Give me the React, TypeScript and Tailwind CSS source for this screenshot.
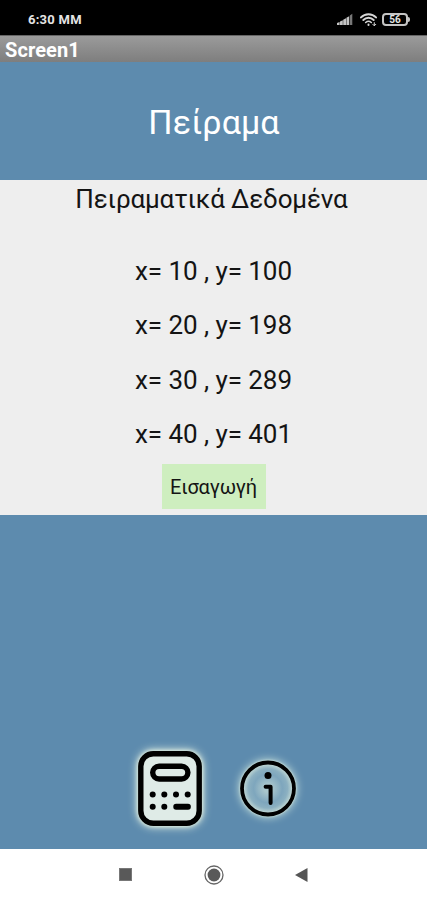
import React from "react";

const measurements = [
  { x: 10, y: 100 },
  { x: 20, y: 198 },
  { x: 30, y: 289 },
  { x: 40, y: 401 },
];

const StatusBar = () => (
  <div className="flex h-[35px] shrink-0 items-center justify-between bg-black pt-[4px] pr-[17px] pl-[28px] text-[#e4e4e4]">
    <span className="text-[13px] leading-none font-bold tracking-[0.25px] whitespace-pre">6:30 MM</span>
    <div className="flex items-center">
      <svg width="16" height="13" viewBox="0 0 16 13" fill="#c4c4c4">
        <path d="M0 12V10L2.6 9V12ZM3 12V8.6L5.8 7.2V12ZM6.2 12V6.8L9 5.2V12ZM9.4 12V4.8L12.2 3.2V12Z" />
        <path d="M12.8 12V2.6L15.3 0.8V12Z" fill="#777" />
      </svg>
      <svg className="ml-[7px]" width="17" height="14" viewBox="0 0 17 14" fill="none" stroke="#d6d6d6" strokeLinecap="round">
        <path d="M1 4.4C5 0.1 12 0.1 16 4.4" strokeWidth="2" />
        <path d="M3.3 7C6.3 4 10.7 4 13.7 7" strokeWidth="1.9" />
        <path d="M5.7 9.5C7.4 8 9.6 8 11.3 9.5" strokeWidth="1.6" />
        <path d="M8.5 11.6V12" strokeWidth="2" />
        <path d="M14.3 9.7V12.5M12.8 11.3L14.3 12.8L15.8 11.3" strokeWidth="1" />
      </svg>
      <div className="ml-[5px] flex h-[13px] w-[26px] items-center justify-center rounded-[4px] border-2 border-[#c4c4c4] text-[10px] leading-none font-bold">
        56
      </div>
      <div className="h-[5px] w-[2px] rounded-r-sm bg-[#c4c4c4]" />
    </div>
  </div>
);

const CalculatorIcon = () => (
  <svg className="overflow-visible" width="64" height="75" viewBox="0 0 64 75">
    <rect x="2.8" y="2.8" width="58.4" height="69.4" rx="12.5" fill="#dfebe7" stroke="#000" strokeWidth="5.4" />
    <rect x="14.7" y="15.2" width="35.2" height="12.8" rx="6.4" fill="#dfebe7" stroke="#000" strokeWidth="5.4" />
    <g fill="#000">
      <circle cx="14.7" cy="43.4" r="3" />
      <circle cx="26.3" cy="43.4" r="3" />
      <circle cx="38" cy="43.4" r="3" />
      <circle cx="49.7" cy="43.4" r="3" />
      <circle cx="14.7" cy="55.8" r="3" />
      <circle cx="26.3" cy="55.8" r="3" />
      <rect x="35.3" y="52.8" width="17.5" height="6" rx="2.8" />
    </g>
  </svg>
);

const InfoIcon = () => (
  <svg className="overflow-visible" width="56" height="57" viewBox="0 0 56 57">
    <defs>
      <radialGradient id="infoFill">
        <stop offset="0.15" stopColor="#a9c6cc" />
        <stop offset="0.55" stopColor="#7ea6bd" />
        <stop offset="0.75" stopColor="#8bb0c1" />
        <stop offset="1" stopColor="#cfe2d9" />
      </radialGradient>
    </defs>
    <circle cx="28" cy="28.5" r="26" fill="url(#infoFill)" stroke="#000" strokeWidth="3.8" />
    <circle cx="28" cy="15.5" r="3.5" fill="#000" />
    <path d="M25.6 26.8H30.6V43" fill="none" stroke="#000" strokeWidth="4" strokeLinecap="round" strokeLinejoin="round" />
  </svg>
);

const NavigationBar = () => (
  <div className="flex h-[51px] shrink-0 items-center bg-white pl-[119px]">
    <div className="size-[13px] border border-[#777] bg-[#595959]" />
    <svg className="ml-[72px]" width="20" height="20" viewBox="0 0 20 20">
      <circle cx="10" cy="10" r="9" fill="none" stroke="#666" strokeWidth="1.3" />
      <circle cx="10" cy="10" r="6.4" fill="#595959" />
    </svg>
    <svg className="ml-[71px]" width="13" height="14" viewBox="0 0 13 14">
      <path d="M0 7L12.5 0V14Z" fill="#555" />
    </svg>
  </div>
);

const App = () => {
  return (
    <div className="flex h-[900px] w-[427px] flex-col overflow-hidden bg-[#5d8bae] font-['Roboto',sans-serif]">
      <StatusBar />
      <div className="flex h-[27px] shrink-0 items-center border-t border-[#656565] bg-linear-to-b from-[#9b9b9b] to-[#7e7e7e] pt-[2px] pl-[5px] text-[20px] leading-none font-bold tracking-[0.1px] text-white">
        Screen1
      </div>
      <header className="flex h-[118px] shrink-0 items-center justify-center">
        <h1 className="pt-px pl-px text-[34px] leading-none tracking-[0.1px] text-white">Πείραμα</h1>
      </header>
      <main className="flex h-[335px] shrink-0 flex-col items-center bg-[#eeeeee] text-[#141414]">
        <h2 className="mt-[3px] pr-[4px] text-[26px] leading-[32px] tracking-[-0.15px]">Πειραματικά Δεδομένα</h2>
        <div className="mt-[29px] flex flex-col">
          {measurements.map((m) => (
            <p key={m.x} className="h-[54.4px] text-[26px] leading-[54px] tracking-[-0.05px] whitespace-pre">
              {`x= ${m.x} , y= ${m.y}`}
            </p>
          ))}
        </div>
        <button className="mt-[2px] h-[45px] w-[104px] shrink-0 bg-[#ceeebf] pt-[2px] text-[20px] leading-none tracking-[-0.15px]">
          Εισαγωγή
        </button>
      </main>
      <footer className="flex flex-1 items-end justify-center gap-[38px] pb-[23px] pl-[7px]">
        <button className="drop-shadow-[0_0_4px_#e8f5e4]">
          <div className="drop-shadow-[0_0_2px_#e8f5e4]">
            <CalculatorIcon />
          </div>
        </button>
        <button className="mb-[9px] drop-shadow-[0_0_4px_#d5ebe0]">
          <div className="drop-shadow-[0_0_1px_#d5ebe0]">
            <InfoIcon />
          </div>
        </button>
      </footer>
      <NavigationBar />
    </div>
  );
};

export default App;
